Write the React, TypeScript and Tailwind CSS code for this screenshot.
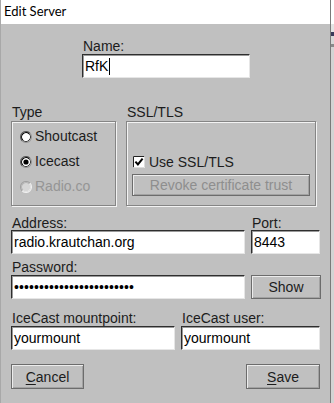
import React from "react";

const font = "font-['Liberation_Sans',Arial,sans-serif]";

function Label({ children, className = "" }: { children: React.ReactNode; className?: string }) {
  return (
    <div className={`h-[14px] whitespace-nowrap pl-[1px] text-[14px] leading-[14px] text-[#1c1c1c] ${className}`}>
      {children}
    </div>
  );
}

function TextField({ value, caret = false, className = "" }: { value: string; caret?: boolean; className?: string }) {
  return (
    <div
      className={`flex h-[24px] items-center overflow-hidden whitespace-nowrap border border-b-[#e6e6e6] border-l-[#2e2e2e] border-r-[#e6e6e6] border-t-[#2e2e2e] bg-white pl-[2px] text-[14px] leading-[16px] text-black shadow-[inset_1px_1px_0_#9a9a9a] ${className}`}
    >
      {value}
      {caret ? <span className="ml-[1px] inline-block h-[17px] w-[1px] bg-black" /> : null}
    </div>
  );
}

function Button({
  children,
  disabled = false,
  className = "",
}: {
  children: React.ReactNode;
  disabled?: boolean;
  className?: string;
}) {
  return (
    <button
      type="button"
      className={`flex items-center justify-center border border-[#6c6c6c] bg-[#c0c0c0] text-[14px] leading-[16px] shadow-[inset_1px_1px_0_#ececec,inset_-1px_-1px_0_#a2a2a2] ${
        disabled ? "text-[#8e8e8e]" : "text-[#1c1c1c]"
      } ${className}`}
    >
      {children}
    </button>
  );
}

// sunken round radio, drawn as two half-rings per bevel
function Radio({ checked = false, disabled = false }: { checked?: boolean; disabled?: boolean }) {
  return (
    <svg width="12" height="12" viewBox="0 0 12 12" className="shrink-0">
      <circle cx="6" cy="6" r="5" fill={disabled ? "#d6d6d6" : "#fff"} />
      <path d="M2.11 9.89 A5.5 5.5 0 0 1 9.89 2.11" fill="none" stroke={disabled ? "#a0a0a0" : "#5a5a5a"} strokeWidth="1.1" />
      <path d="M9.89 2.11 A5.5 5.5 0 0 1 2.11 9.89" fill="none" stroke={disabled ? "#f0f0f0" : "#9a9a9a"} strokeWidth="1.1" />
      <path d="M2.82 9.18 A4.5 4.5 0 0 1 9.18 2.82" fill="none" stroke={disabled ? "#b4b4b4" : "#000"} strokeWidth="1.1" />
      <path d="M9.18 2.82 A4.5 4.5 0 0 1 2.82 9.18" fill="none" stroke={disabled ? "#e4e4e4" : "#404040"} strokeWidth="1" />
      {checked ? <circle cx="6" cy="6" r="2.6" fill="#000" /> : null}
    </svg>
  );
}

function Checkbox() {
  return (
    <svg width="12" height="12" viewBox="0 0 12 12" className="shrink-0">
      <rect x="0" y="0" width="12" height="12" fill="#fff" />
      <path d="M0.5 11.5 V0.5 H11.5" fill="none" stroke="#222" strokeWidth="1" />
      <path d="M11.5 0.5 V11.5 H0.5" fill="none" stroke="#dcdcdc" strokeWidth="1" />
      <path d="M2.4 5.6 L4.9 8.4 L9.6 2.7" fill="none" stroke="#000" strokeWidth="2" />
    </svg>
  );
}

const groupBox =
  "border border-[#858585] shadow-[inset_1px_1px_0_#f3f3f3,1px_1px_0_#f3f3f3]";

export default function App() {
  return (
    <div className={`flex h-[403px] w-[334px] overflow-hidden bg-[#c0c0c0] ${font}`}>
      <div className="flex w-[331px] flex-col border-l border-r border-l-[#a8a8a8] border-r-[#7a7a7a]">
        <div className="flex h-[24px] shrink-0 items-center bg-white pl-[3px] font-['Lato',sans-serif] text-[13px] text-black">
          Edit Server
        </div>

        <div className="flex flex-1 flex-col pl-[10px] pt-[15px]">
          <div className="ml-[71px] w-[168px]">
            <Label>Name:</Label>
            <TextField value="RfK" caret className="mt-[1px]" />
          </div>

          <div className="mt-[27px] flex gap-[10px]">
            <div className="w-[105px]">
              <Label>Type</Label>
              <div className={`mt-[2px] flex h-[85px] flex-col pl-[8px] pt-[2px] ${groupBox}`}>
                <div className="flex h-[25px] items-center gap-[3px] text-[14px] text-[#1c1c1c]">
                  <Radio />
                  Shoutcast
                </div>
                <div className="flex h-[25px] items-center gap-[3px] text-[14px] text-[#1c1c1c]">
                  <Radio checked />
                  Icecast
                </div>
                <div className="flex h-[25px] items-center gap-[3px] text-[14px] text-[#959595]">
                  <Radio disabled />
                  Radio.co
                </div>
              </div>
            </div>

            <div className="w-[190px]">
              <Label>SSL/TLS</Label>
              <div className={`mt-[2px] flex h-[85px] flex-col pl-[5px] pt-[32px] ${groupBox}`}>
                <div className="flex h-[16px] items-center gap-[4px] pl-[1px] text-[14px] text-[#1c1c1c]">
                  <Checkbox />
                  Use SSL/TLS
                </div>
                <Button disabled className="mt-[4px] h-[22px] w-[178px]">
                  Revoke certificate trust
                </Button>
              </div>
            </div>
          </div>

          <div className="mt-[10px] flex gap-[6px]">
            <div className="w-[234px]">
              <Label>Address:</Label>
              <TextField value="radio.krautchan.org" />
            </div>
            <div className="w-[69px]">
              <Label>Port:</Label>
              <TextField value="8443" />
            </div>
          </div>

          <div className="mt-[6px] flex items-end gap-[6px]">
            <div className="w-[234px]">
              <Label className="mb-[1px]">Password:</Label>
              <TextField value={"\u2022".repeat(24)} className="tracking-[0.1px]" />
            </div>
            <Button className="h-[24px] w-[70px]">Show</Button>
          </div>

          <div className="mt-[12px] flex gap-[6px]">
            <div className="w-[164px]">
              <Label className="mb-[1px]">IceCast mountpoint:</Label>
              <TextField value="yourmount" />
            </div>
            <div className="w-[139px]">
              <Label className="mb-[1px]">IceCast user:</Label>
              <TextField value="yourmount" />
            </div>
          </div>

          <div className="mt-[14px] flex w-[309px] justify-between">
            <Button className="h-[25px] w-[73px]">
              <span className="underline underline-offset-2">C</span>ancel
            </Button>
            <Button className="h-[25px] w-[74px]">
              <span className="underline underline-offset-2">S</span>ave
            </Button>
          </div>
        </div>
      </div>

      <div className="flex w-[3px] flex-col">
        <div className="h-[24px] bg-white" />
        <div className="h-[8px] bg-[#e4e4e4]" />
        <div className="h-[4px] bg-[#3a3a5a]" />
        <div className="h-[8px] bg-[#d8d8d8]" />
        <div className="h-[3px] bg-[#8a8a8a]" />
        <div className="flex-1 bg-[#d4d4d4]" />
      </div>
    </div>
  );
}
